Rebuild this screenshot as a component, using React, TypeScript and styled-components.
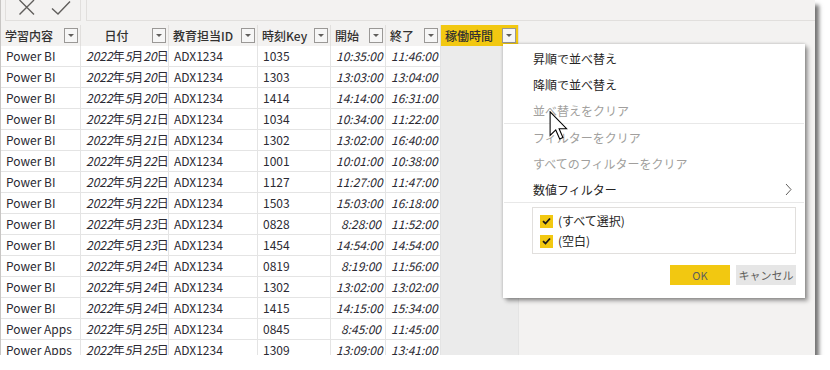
import { Fragment } from 'react';
import styled, { createGlobalStyle } from 'styled-components';

const GlobalStyle = createGlobalStyle`
  html, body {
    margin: 0;
    padding: 0;
    background: #ffffff;
  }
  body {
    font-family: "Noto Sans CJK JP", "Liberation Sans", sans-serif;
    color: #252423;
  }
`;

const COLS = [80, 88, 89, 73, 55, 55, 78];

type Align = 'left' | 'right' | 'center';

const Frame = styled.div`
  position: relative;
  width: 815px;
  height: 355px;
  overflow: hidden;
  background: #f3f2f1;
  border-left: 1px solid #c8c6c4;
  box-sizing: border-box;
  box-shadow: 4px 5px 4px rgba(0, 0, 0, 0.55);
`;

const TopBar = styled.div`
  display: flex;
  gap: 5px;
  height: 21px;
  padding-left: 4px;
  margin-bottom: 4px;
`;

const IconBox = styled.div`
  width: 76px;
  box-sizing: border-box;
  border: 1px solid #e1dfdd;
  border-top: none;
  display: flex;
  align-items: flex-start;
  gap: 16px;
  padding-left: 12px;

  > svg {
    display: block;
  }
`;

const FormulaBox = styled.div`
  flex: 1;
  border-left: 1px solid #e1dfdd;
  border-bottom: 1px solid #e1dfdd;
`;

const Table = styled.div`
  display: grid;
  grid-template-columns: ${COLS.map(c => `${c}px`).join(' ')};
  grid-auto-rows: 21px;
  width: ${COLS.reduce((a, b) => a + b, 0)}px;
`;

const HeadCell = styled.div<{ $active?: boolean; $align: Align }>`
  display: flex;
  align-items: center;
  gap: 4px;
  padding: 0 2px 0 4px;
  box-sizing: border-box;
  background: ${p => (p.$active ? '#f2c811' : '#f3f2f1')};
  border-right: 1px solid #e1dfdd;
  font-size: 12px;
  font-weight: 500;
  color: #323130;
  line-height: 21px;
  white-space: nowrap;

  > .label {
    flex: 1;
    text-align: ${p => p.$align};
  }
`;

const FilterButton = styled.div`
  width: 14px;
  height: 15px;
  box-sizing: border-box;
  border: 1px solid #9a9896;
  background: #f6f6f6;
  display: flex;
  align-items: center;
  justify-content: center;

  &::after {
    content: '';
    border-left: 3px solid transparent;
    border-right: 3px solid transparent;
    border-top: 3px solid #605e5c;
  }
`;

const Cell = styled.div<{ $align?: Align; $italic?: boolean; $empty?: boolean }>`
  padding: 0 4px 0 5px;
  box-sizing: border-box;
  background: ${p => (p.$empty ? '#ebebeb' : '#ffffff')};
  border-right: 1px solid #e4e4e4;
  border-bottom: ${p => (p.$empty ? 'none' : '1px solid #e4e4e4')};
  font-size: 12px;
  line-height: 20px;
  color: #2b2a33;
  text-align: ${p => p.$align || 'left'};
  font-style: ${p => (p.$italic ? 'italic' : 'normal')};
  white-space: nowrap;
  overflow: hidden;

  em {
    font-style: italic;
  }
`;

const Menu = styled.div`
  position: absolute;
  left: 502px;
  top: 44px;
  width: 302px;
  height: 254px;
  box-sizing: border-box;
  background: #ffffff;
  padding-top: 1px;
  box-shadow: 0 0 3px rgba(0, 0, 0, 0.25), 3px 3px 4px rgba(0, 0, 0, 0.35);
  display: flex;
  flex-direction: column;
`;

const MenuItem = styled.div<{ $disabled?: boolean }>`
  height: 26px;
  display: flex;
  align-items: center;
  justify-content: space-between;
  padding: 0 13px 0 30px;
  font-size: 12px;
  color: ${p => (p.$disabled ? '#a19f9d' : '#252423')};
`;

const Separator = styled.div`
  height: 1px;
  margin: 0 1px;
  background: #e8e8e8;
`;

const CheckList = styled.div`
  margin: 4px 9px 0 29px;
  height: 47px;
  box-sizing: border-box;
  border: 1px solid #e1dfdd;
  padding: 5px 0 0 7px;
  display: flex;
  flex-direction: column;
  gap: 4px;
`;

const CheckRow = styled.div`
  display: flex;
  align-items: center;
  gap: 5px;
  font-size: 12px;
  line-height: 16px;
`;

const CheckBox = styled.div`
  width: 13px;
  height: 13px;
  background: #f2c811;
  display: flex;
  align-items: center;
  justify-content: center;
`;

const ButtonRow = styled.div`
  display: flex;
  justify-content: flex-end;
  gap: 6px;
  margin: 11px 9px 0 0;
`;

const Button = styled.div<{ $primary?: boolean }>`
  width: 60px;
  height: 20px;
  display: flex;
  align-items: center;
  justify-content: center;
  font-size: 11px;
  color: #605e5c;
  background: ${p => (p.$primary ? '#f2c811' : '#e6e6e6')};
`;

const Cursor = styled.svg`
  position: absolute;
  left: 548px;
  top: 111px;
`;

const rows: string[][] = [
  ['Power BI', '2022年5月20日', 'ADX1234', '1035', '10:35:00', '11:46:00'],
  ['Power BI', '2022年5月20日', 'ADX1234', '1303', '13:03:00', '13:04:00'],
  ['Power BI', '2022年5月20日', 'ADX1234', '1414', '14:14:00', '16:31:00'],
  ['Power BI', '2022年5月21日', 'ADX1234', '1034', '10:34:00', '11:22:00'],
  ['Power BI', '2022年5月21日', 'ADX1234', '1302', '13:02:00', '16:40:00'],
  ['Power BI', '2022年5月22日', 'ADX1234', '1001', '10:01:00', '10:38:00'],
  ['Power BI', '2022年5月22日', 'ADX1234', '1127', '11:27:00', '11:47:00'],
  ['Power BI', '2022年5月22日', 'ADX1234', '1503', '15:03:00', '16:18:00'],
  ['Power BI', '2022年5月23日', 'ADX1234', '0828', '8:28:00', '11:52:00'],
  ['Power BI', '2022年5月23日', 'ADX1234', '1454', '14:54:00', '14:54:00'],
  ['Power BI', '2022年5月24日', 'ADX1234', '0819', '8:19:00', '11:56:00'],
  ['Power BI', '2022年5月24日', 'ADX1234', '1302', '13:02:00', '13:02:00'],
  ['Power BI', '2022年5月24日', 'ADX1234', '1415', '14:15:00', '15:34:00'],
  ['Power Apps', '2022年5月25日', 'ADX1234', '0845', '8:45:00', '11:45:00'],
  ['Power Apps', '2022年5月25日', 'ADX1234', '1309', '13:09:00', '13:41:00'],
];

const headers: { label: string; align: Align; active?: boolean }[] = [
  { label: '学習内容', align: 'left' },
  { label: '日付', align: 'center' },
  { label: '教育担当ID', align: 'left' },
  { label: '時刻Key', align: 'left' },
  { label: '開始', align: 'left' },
  { label: '終了', align: 'left' },
  { label: '稼働時間', align: 'left', active: true },
];

const DateText = ({ value }: { value: string }) => (
  <>
    {value.split(/(\d+)/).map((part, i) =>
      /\d/.test(part) ? <em key={i}>{part}</em> : <span key={i}>{part}</span>
    )}
  </>
);

const Check = () => (
  <svg width="9" height="8" viewBox="0 0 9 8">
    <path d="M1 4.2 L3.5 6.5 L8 1.5" fill="none" stroke="#1b1a19" strokeWidth="1.8"/>
  </svg>
);

export default function App() {
  return (
    <>
      <GlobalStyle/>
      <Frame>
        <TopBar>
          <IconBox>
            <svg width="17" height="16" viewBox="0 0 17 16">
              <path d="M1.5 0 L16 14.5 M16 0 L1.5 14.5" stroke="#605e5c" strokeWidth="1.4" fill="none"/>
            </svg>
            <svg width="20" height="16" viewBox="0 0 20 16">
              <path d="M1 8.5 L7 14 L19 1.5" stroke="#605e5c" strokeWidth="1.4" fill="none"/>
            </svg>
          </IconBox>
          <FormulaBox/>
        </TopBar>
        <Table>
          {headers.map(h => (
            <HeadCell key={h.label} $active={h.active} $align={h.align}>
              <span className="label">{h.label}</span>
              <FilterButton/>
            </HeadCell>
          ))}
          {rows.map((r, i) => (
            <Fragment key={i}>
              <Cell>{r[0]}</Cell>
              <Cell $align="right"><DateText value={r[1]}/></Cell>
              <Cell>{r[2]}</Cell>
              <Cell>{r[3]}</Cell>
              <Cell $align="right" $italic>{r[4]}</Cell>
              <Cell $align="right" $italic>{r[5]}</Cell>
              <Cell $empty/>
            </Fragment>
          ))}
        </Table>
        <Menu>
          <MenuItem>昇順で並べ替え</MenuItem>
          <MenuItem>降順で並べ替え</MenuItem>
          <MenuItem $disabled>並べ替えをクリア</MenuItem>
          <Separator/>
          <MenuItem $disabled>フィルターをクリア</MenuItem>
          <MenuItem $disabled>すべてのフィルターをクリア</MenuItem>
          <MenuItem>
            <span>数値フィルター</span>
            <svg width="7" height="13" viewBox="0 0 7 13">
              <path d="M1 1 L6 6.5 L1 12" fill="none" stroke="#605e5c" strokeWidth="1"/>
            </svg>
          </MenuItem>
          <Separator/>
          <CheckList>
            <CheckRow><CheckBox><Check/></CheckBox>(すべて選択)</CheckRow>
            <CheckRow><CheckBox><Check/></CheckBox>(空白)</CheckRow>
          </CheckList>
          <ButtonRow>
            <Button $primary>OK</Button>
            <Button>キャンセル</Button>
          </ButtonRow>
        </Menu>
        <Cursor width="19" height="29" viewBox="0 0 12 19">
          <path d="M0.5 0.5 L0.5 16 L4.2 12.4 L6.8 18.3 L8.9 17.4 L6.4 11.6 L11.3 11.6 Z" fill="#ffffff" stroke="#000000" strokeWidth="0.7" strokeLinejoin="miter"/>
        </Cursor>
      </Frame>
    </>
  );
}
